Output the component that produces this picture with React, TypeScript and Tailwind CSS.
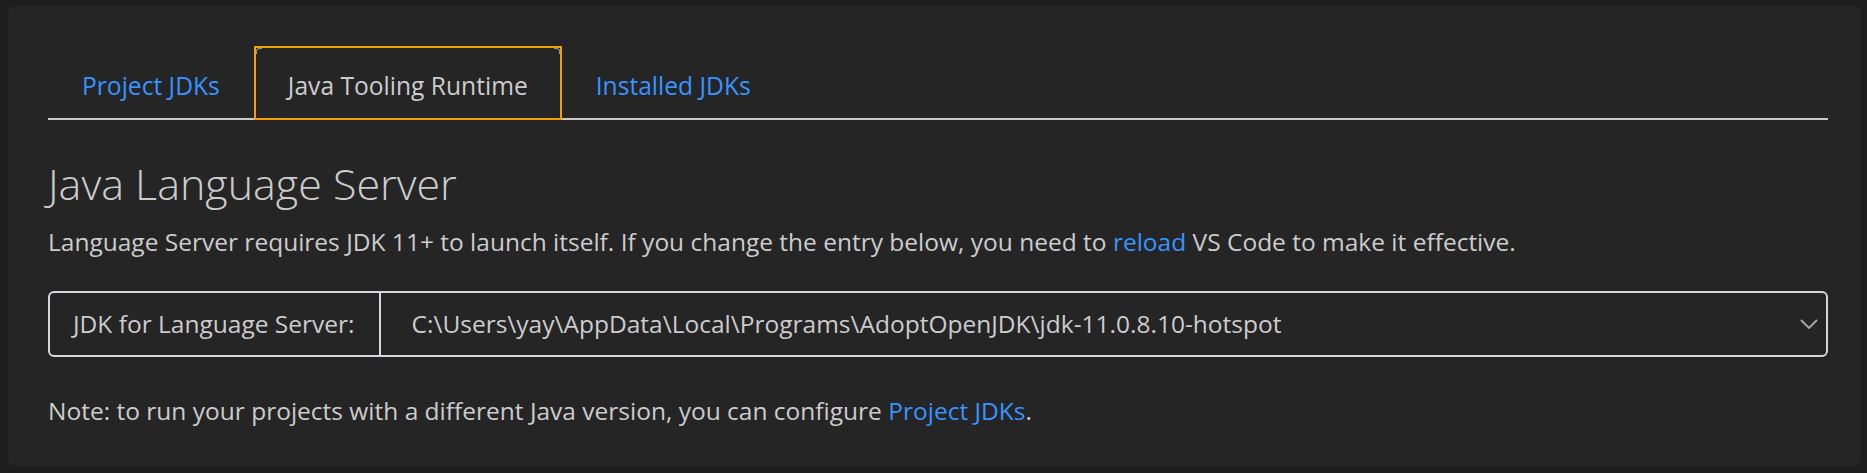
export default function App() {
  return (
    <div className="min-h-screen bg-[#1e1e1e] pt-[6px] pl-[8px] pr-[6px] pb-[7px] font-['Open_Sans','Noto_Sans',sans-serif] text-[#cccccc]">
      <div className="h-[460px] rounded-md bg-[#252526] pl-[40px] pr-[33px] pt-[40px]">
        {/* tabs */}
        <div className="flex border-b-2 border-[#c8c8c8]">
          <div className="flex h-[72px] items-center px-[34px] pt-[8px] text-[24.6px] text-[#3794ff]">Project JDKs</div>
          <div className="relative -mb-[2px] flex h-[74px] items-center border-2 border-[#f0a000] px-[32px] pt-[6px] text-[24.6px] text-[#cccccc]">
            <span className="absolute left-0 top-0 h-[6px] w-[6px] rounded-tl-[4px] border-l border-t border-[#999]"></span>
            <span className="absolute right-0 top-0 h-[6px] w-[6px] rounded-tr-[4px] border-r border-t border-[#999]"></span>
            Java Tooling Runtime
          </div>
          <div className="flex h-[72px] items-center px-[34px] pt-[8px] text-[24.6px] text-[#3794ff]">Installed JDKs</div>
        </div>

        <h1 className="mt-[38px] text-[43px] font-light leading-[52px] text-[#cccccc]">Java Language Server</h1>
        <p className="mt-[16px] text-[24.5px] leading-[32px]">
          Language Server requires JDK 11+ to launch itself. If you change the entry below, you need to{" "}
          <span className="text-[#3794ff]">reload</span> VS Code to make it effective.
        </p>

        <div className="mt-[33px] flex h-[66px] items-stretch rounded-[6px] border-2 border-[#d4d7dc]">
          <div className="flex items-center border-r-2 border-[#d4d7dc] pl-[23px] pr-[24px] text-[24.5px]">JDK for Language Server:</div>
          <div className="flex flex-1 items-center justify-between pl-[31px] pr-[8px] text-[24.5px]">
            <span>C:\Users\yay\AppData\Local\Programs\AdoptOpenJDK\jdk-11.0.8.10-hotspot</span>
            <svg width="18" height="10" viewBox="0 0 18 10" fill="none">
              <path d="M1 1 L9 9 L17 1" stroke="#aaaaaa" strokeWidth="1.8" />
            </svg>
          </div>
        </div>

        <p className="mt-[38px] text-[24.5px] leading-[32px]">
          Note: to run your projects with a different Java version, you can configure{" "}
          <span className="text-[#3794ff]">Project JDKs</span>.
        </p>
      </div>
    </div>
  );
}
